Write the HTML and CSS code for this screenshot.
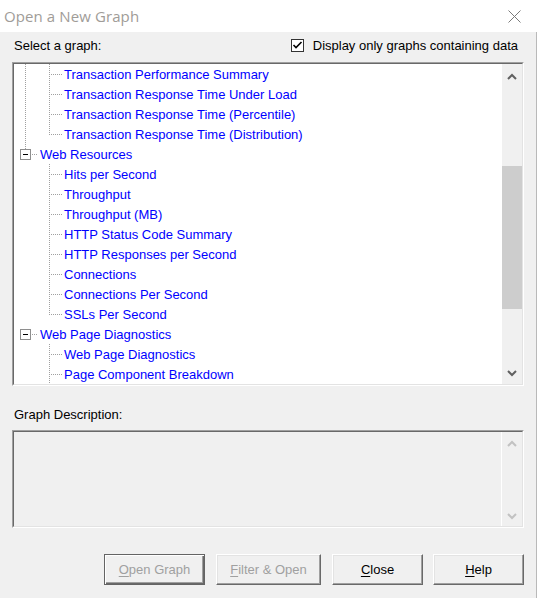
FILE: index.html
```html
<!DOCTYPE html>
<html>
<head>
<meta charset="utf-8">
<link rel="stylesheet" href="styles.css">
</head>
<body>
<div class="window">
  <div class="titlebar">
    <span class="title">Open a New Graph</span>
    <svg class="close-x" width="13" height="13" viewBox="0 0 13 13"><path d="M0.5 0.5 L12.5 12.5 M12.5 0.5 L0.5 12.5" stroke="#7a7a7a" stroke-width="1" fill="none"/></svg>
  </div>
  <div class="body">
    <div class="header">
      <span>Select a graph:</span>
      <label class="check">
        <span class="checkbox"><svg width="11" height="11" viewBox="0 0 11 11"><path d="M1.5 5 L4 7.5 L9.5 2" stroke="#000" stroke-width="1.6" fill="none"/></svg></span>
        <span>Display only graphs containing data</span>
      </label>
    </div>

    <div class="sunken tree-box">
      <div class="sunken-in tree-inner">
        <div class="tree">
          <div class="row"><span class="cell c-pipe"></span><span class="cell c-tee"></span><span class="label">Transaction Performance Summary</span></div>
          <div class="row"><span class="cell c-pipe"></span><span class="cell c-tee"></span><span class="label">Transaction Response Time Under Load</span></div>
          <div class="row"><span class="cell c-pipe"></span><span class="cell c-tee"></span><span class="label">Transaction Response Time (Percentile)</span></div>
          <div class="row"><span class="cell c-pipe"></span><span class="cell c-ell"></span><span class="label">Transaction Response Time (Distribution)</span></div>
          <div class="row"><span class="cell c-box c-box-top"><span class="box"></span></span><span class="label">Web Resources</span></div>
          <div class="row"><span class="cell"></span><span class="cell c-tee"></span><span class="label">Hits per Second</span></div>
          <div class="row"><span class="cell"></span><span class="cell c-tee"></span><span class="label">Throughput</span></div>
          <div class="row"><span class="cell"></span><span class="cell c-tee"></span><span class="label">Throughput (MB)</span></div>
          <div class="row"><span class="cell"></span><span class="cell c-tee"></span><span class="label">HTTP Status Code Summary</span></div>
          <div class="row"><span class="cell"></span><span class="cell c-tee"></span><span class="label">HTTP Responses per Second</span></div>
          <div class="row"><span class="cell"></span><span class="cell c-tee"></span><span class="label">Connections</span></div>
          <div class="row"><span class="cell"></span><span class="cell c-tee"></span><span class="label">Connections Per Second</span></div>
          <div class="row"><span class="cell"></span><span class="cell c-ell"></span><span class="label">SSLs Per Second</span></div>
          <div class="row"><span class="cell c-box"><span class="box"></span></span><span class="label">Web Page Diagnostics</span></div>
          <div class="row"><span class="cell"></span><span class="cell c-tee"></span><span class="label">Web Page Diagnostics</span></div>
          <div class="row"><span class="cell"></span><span class="cell c-tee"></span><span class="label">Page Component Breakdown</span></div>
        </div>
        <div class="vscroll">
          <div class="sb-btn sb-up"><svg width="10" height="7" viewBox="0 0 10 7"><polyline points="1,6 5,2 9,6" stroke="#606060" stroke-width="2" fill="none"/></svg></div>
          <div class="sb-track"><div class="sb-thumb"></div></div>
          <div class="sb-btn sb-down"><svg width="10" height="7" viewBox="0 0 10 7"><polyline points="1,1 5,5 9,1" stroke="#606060" stroke-width="2" fill="none"/></svg></div>
        </div>
      </div>
    </div>

    <div class="desc-label">Graph Description:</div>

    <div class="sunken desc-box">
      <div class="sunken-in desc-inner">
        <div class="desc-text"></div>
        <div class="vscroll desc-scroll">
          <div class="sb-btn dsb-up"><svg width="10" height="7" viewBox="0 0 10 7"><polyline points="1,6 5,2 9,6" stroke="#c2c2c2" stroke-width="2" fill="none"/></svg></div>
          <div class="sb-track"></div>
          <div class="sb-btn dsb-down"><svg width="10" height="7" viewBox="0 0 10 7"><polyline points="1,1 5,5 9,1" stroke="#c2c2c2" stroke-width="2" fill="none"/></svg></div>
        </div>
      </div>
    </div>

    <div class="buttons">
      <div class="btn btn-default btn-open disabled"><span><u>O</u>pen Graph</span></div>
      <div class="btn btn-filter disabled"><span><u>F</u>ilter &amp; Open</span></div>
      <div class="btn btn-close"><span><u>C</u>lose</span></div>
      <div class="btn btn-help"><span><u>H</u>elp</span></div>
    </div>
  </div>
</div>
</body>
</html>
```

FILE: styles.css
```css
* { box-sizing: border-box; }
html, body { margin: 0; padding: 0; }
body {
  width: 537px;
  height: 598px;
  overflow: hidden;
  background: #f0f0f0;
  font-family: "Liberation Sans", Arial, sans-serif;
  font-size: 13px;
  color: #000;
}
.window { width: 537px; height: 598px; display: flex; flex-direction: column; }

.titlebar {
  height: 32px;
  background: #fff;
  display: flex;
  align-items: center;
  justify-content: space-between;
  padding: 0 16px 0 4px;
}
.title {
  font-family: "Open Sans", "Noto Sans", sans-serif;
  font-size: 15px;
  color: #a09c98;
  letter-spacing: 0.1px;
}
.close-x { display: block; margin-top: 1px; }

.body {
  flex: 1;
  border-right: 1px solid #b9b9b9;
  display: flex;
  flex-direction: column;
}

.header {
  height: 30px;
  display: flex;
  align-items: center;
  justify-content: space-between;
  padding: 0 18px 4px 14px;
}
.check { display: flex; align-items: center; gap: 9px; }
.checkbox {
  width: 13px; height: 13px;
  border: 1px solid #333;
  background: #fff;
  display: flex; align-items: center; justify-content: center;
}
.checkbox svg { display: block; }

.sunken {
  border: 1px solid;
  border-color: #a0a0a0 #fff #fff #a0a0a0;
  margin-left: 12px;
  width: 512px;
}
.sunken-in {
  border: 1px solid;
  border-color: #696969 #e3e3e3 #e3e3e3 #696969;
  height: 100%;
  display: flex;
}
.tree-box { height: 324px; }
.tree-inner { background: #fff; }
.tree { flex: 1; overflow: hidden; }

.row { height: 20px; display: flex; align-items: stretch; white-space: nowrap; }
.cell { width: 24px; flex: none; height: 20px; display: flex; align-items: flex-start; }
.label { color: #0000ff; line-height: 20px; padding: 1px 0 0 2px; }

.c-pipe {
  background: repeating-linear-gradient(to bottom, #a0a0a0 0 1px, transparent 1px 2px) 11px 0 / 1px 20px no-repeat;
}
.c-tee {
  background:
    repeating-linear-gradient(to bottom, #a0a0a0 0 1px, transparent 1px 2px) 11px 0 / 1px 20px no-repeat,
    repeating-linear-gradient(to right, #a0a0a0 0 1px, transparent 1px 2px) 13px 10px / 11px 1px no-repeat;
}
.c-ell {
  background:
    repeating-linear-gradient(to bottom, #a0a0a0 0 1px, transparent 1px 2px) 11px 0 / 1px 11px no-repeat,
    repeating-linear-gradient(to right, #a0a0a0 0 1px, transparent 1px 2px) 13px 10px / 11px 1px no-repeat;
}
.c-box {
  background: repeating-linear-gradient(to right, #a0a0a0 0 1px, transparent 1px 2px) 18px 10px / 6px 1px no-repeat;
}
.c-box-top {
  background:
    repeating-linear-gradient(to right, #a0a0a0 0 1px, transparent 1px 2px) 18px 10px / 6px 1px no-repeat,
    repeating-linear-gradient(to bottom, #a0a0a0 0 1px, transparent 1px 2px) 11px 0 / 1px 5px no-repeat;
}
.box {
  width: 11px; height: 11px;
  margin: 5px 0 0 6px;
  border: 1px solid #8e8e8e;
  background: linear-gradient(#000, #000) center / 5px 1px no-repeat, #fff;
}

.vscroll {
  width: 20px;
  flex: none;
  background: #f0f0f0;
  display: flex;
  flex-direction: column;
}
.sb-btn { display: flex; justify-content: center; align-items: center; flex: none; }
.sb-btn svg { display: block; }
.sb-up { height: 25px; }
.sb-down { height: 21px; }
.sb-track { flex: 1; display: flex; flex-direction: column; }
.sb-thumb { margin-top: 77px; height: 143px; background: #cdcdcd; }

.desc-label { margin: 21px 0 0 14px; line-height: 16px; }
.desc-box { margin-top: 7px; height: 98px; }
.desc-inner { background: #f0f0f0; }
.desc-text { flex: 1; border-right: 1px solid #fff; }
.desc-scroll { width: 20px; }
.dsb-up { height: 23px; }
.dsb-down { height: 19px; }

.buttons {
  margin-top: 26px;
  display: flex;
  padding-left: 104px;
}
.btn {
  height: 31px;
  background: #f0f0f0;
  border: 1px solid;
  border-color: #fff #696969 #696969 #fff;
  box-shadow: inset -1px -1px 0 #a0a0a0, inset 1px 1px 0 #e3e3e3;
  display: flex;
  align-items: center;
  justify-content: center;
  padding-bottom: 1px;
}
.btn u { text-decoration-thickness: 1px; text-underline-offset: 2px; }
.btn-default {
  border: 1px solid #646464;
  box-shadow: inset 1px 1px 0 #fff, inset -1px -1px 0 #696969, inset -2px -2px 0 #a0a0a0;
}
.disabled { color: #a0a0a0; }
.btn-open { width: 101px; }
.btn-filter { width: 105px; margin-left: 11px; }
.btn-close { width: 91px; margin-left: 11px; }
.btn-help { width: 91px; margin-left: 10px; }
```
